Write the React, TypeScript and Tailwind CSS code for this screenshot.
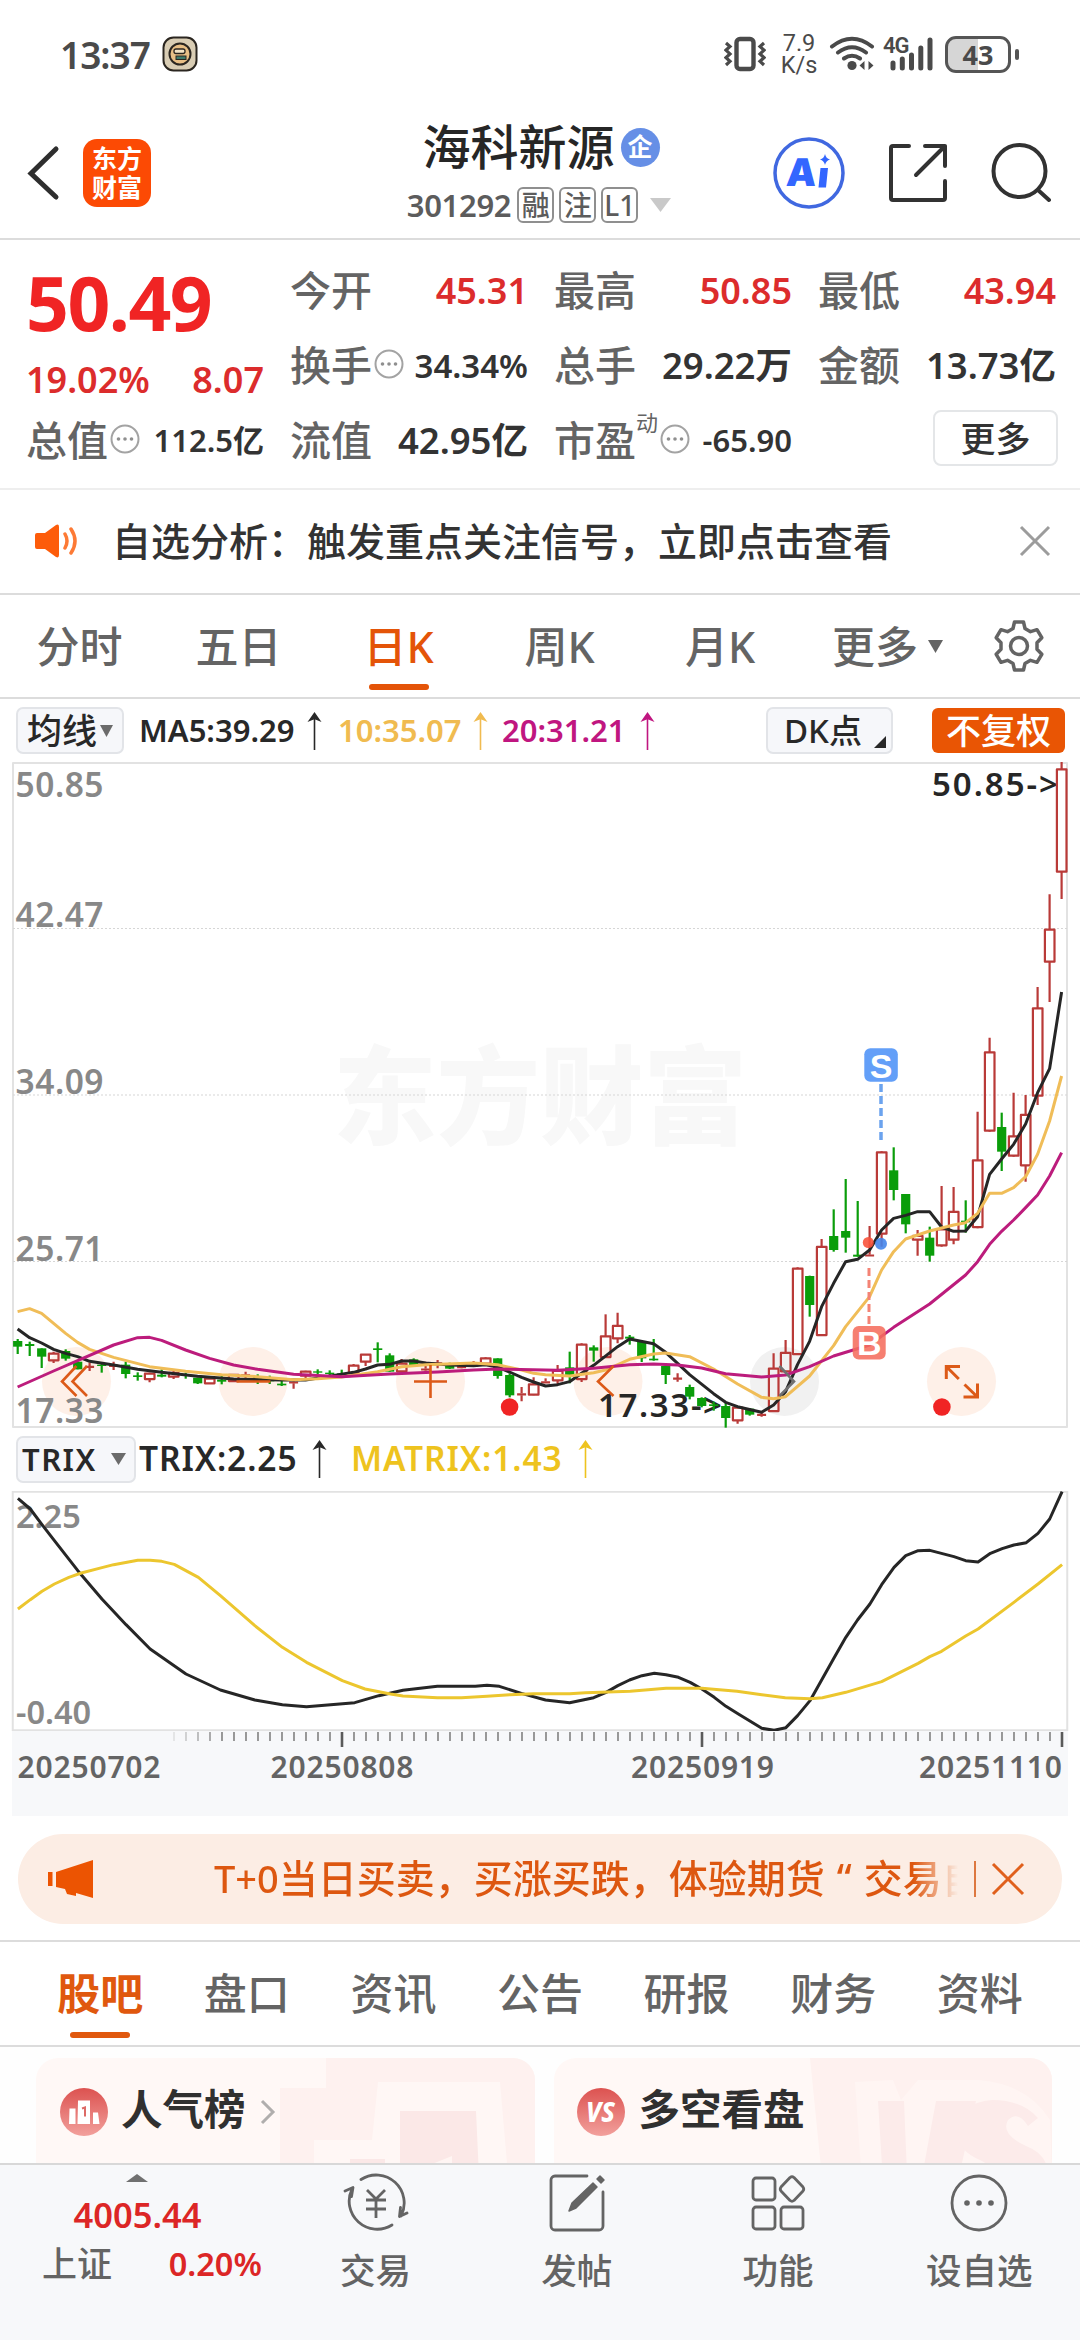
import type { ReactNode } from "react";

const STEP = 12;
const FIRST_X = 17.6;

type Candle = [dir: "u" | "d", high: number, top: number, bottom: number, low: number];
type Point = [index: number, y: number];

// y values are stored in thirds of a pixel, relative to the base of their block
const LOW_BASE = 478;
const HIGH_BASE = -22;

const EARLY: Candle[] = [
  ["d", 297, 303, 320, 342], ["d", 305, 312, 318, 348], ["d", 325, 325, 350, 384], ["u", 335, 340, 362, 369],
  ["d", 328, 333, 356, 362], ["d", 365, 365, 388, 388], ["u", 368, 379, 382, 393], ["d", 372, 374, 378, 398],
  ["u", 365, 376, 379, 390], ["d", 365, 374, 402, 415], ["d", 397, 406, 411, 422], ["u", 398, 400, 418, 427],
  ["d", 388, 404, 410, 412], ["u", 393, 398, 411, 417], ["d", 398, 403, 408, 416], ["d", 413, 413, 430, 432],
  ["u", 413, 415, 431, 432], ["d", 402, 419, 425, 433], ["u", 402, 404, 424, 424], ["u", 395, 404, 408, 420],
  ["d", 403, 408, 424, 432], ["d", 407, 419, 424, 432], ["d", 420, 431, 436, 438], ["u", 422, 425, 430, 446],
  ["u", 392, 394, 408, 420], ["d", 388, 394, 398, 403], ["d", 391, 398, 402, 405], ["d", 389, 400, 404, 408],
  ["u", 372, 376, 400, 402], ["u", 342, 343, 366, 378], ["d", 307, 325, 330, 367], ["d", 340, 346, 395, 395],
  ["u", 357, 370, 395, 396], ["d", 355, 358, 375, 377], ["u", 365, 385, 392, 400], ["u", 360, 368, 372, 385],
  ["d", 368, 372, 386, 387], ["u", 372, 380, 383, 385], ["u", 363, 374, 378, 380], ["u", 352, 354, 372, 378],
  ["d", 355, 355, 408, 416], ["d", 400, 405, 466, 472], ["u", 441, 460, 466, 484], ["u", 412, 432, 465, 466],
  ["u", 415, 424, 430, 430], ["u", 375, 392, 422, 432], ["d", 335, 382, 408, 430], ["u", 310, 313, 418, 426],
  ["d", 316, 322, 332, 365], ["u", 223, 288, 352, 352], ["u", 218, 257, 296, 310], ["d", 285, 290, 296, 314],
  ["d", 302, 304, 355, 366], ["d", 297, 356, 361, 362], ["d", 376, 378, 405, 432], ["u", 400, 414, 418, 425],
  ["d", 434, 441, 470, 478], ["d", 472, 474, 498, 502], ["d", 485, 493, 498, 512], ["d", 488, 498, 534, 563],
  ["u", 500, 502, 542, 551], ["d", 504, 506, 524, 527], ["u", 515, 523, 526, 530], ["u", 340, 385, 514, 515],
  ["u", 300, 338, 395, 400], ["u", 82, 85, 343, 345], ["d", 107, 108, 195, 230],
];

const LATE: Candle[] = [
  ["u", 1497, 1520, 1786, 1788], ["d", 1408, 1488, 1530, 1535], ["d", 1317, 1473, 1493, 1538], ["d", 1383, 1544, 1550, 1550],
  ["u", 1458, 1544, 1549, 1549], ["u", 1234, 1236, 1482, 1520], ["d", 1222, 1291, 1350, 1381], ["d", 1362, 1362, 1453, 1480],
  ["u", 1470, 1487, 1500, 1547], ["d", 1460, 1493, 1547, 1565], ["u", 1338, 1467, 1517, 1520], ["u", 1341, 1415, 1500, 1513],
  ["d", 1381, 1442, 1447, 1478], ["u", 1115, 1260, 1462, 1465], ["u", 893, 936, 1173, 1175], ["d", 1118, 1161, 1235, 1293],
  ["u", 1058, 1188, 1248, 1250], ["u", 1065, 1124, 1277, 1325], ["u", 741, 804, 1068, 1095], ["u", 463, 568, 666, 786],
  ["u", 66, 87, 396, 477],
];

const MA5_EARLY: Point[] = [
  [0, 267], [1, 293], [2, 309], [3, 328], [4, 340], [5, 350], [6, 364], [8, 375], [10, 388], [12, 397], [15, 409],
  [18, 417], [22, 420], [24, 420], [27, 403], [28, 397], [29, 387], [30, 375], [31, 373], [32, 363], [33, 363],
  [34, 369], [36, 375], [38, 377], [39, 374], [40, 381], [41, 396], [42, 412], [43, 426], [44, 438], [45, 434],
  [46, 425], [47, 400], [48, 376], [50, 320], [51, 297], [53, 311], [54, 337], [55, 370], [56, 404], [58, 461],
  [59, 487], [60, 500], [62, 517], [63, 495], [64, 455], [65, 373], [66, 304], [67, 200], [68, 130], [69, 65],
  [70, 58], [71, 30],
];
const MA5_LATE: Point[] = [
  [72, 1470], [73, 1435], [74, 1426], [75, 1415], [76, 1415], [77, 1461], [78, 1474], [79, 1473], [80, 1430],
  [81, 1303], [82, 1257], [83, 1213], [84, 1152], [85, 1058], [86, 986], [87, 756],
];
const MA10_EARLY: Point[] = [
  [0, 215], [1, 206], [2, 220], [3, 250], [4, 280], [5, 307], [6, 328], [8, 352], [11, 380], [14, 394], [17, 404],
  [20, 410], [23, 419], [25, 416], [27, 411], [30, 395], [32, 380], [34, 374], [38, 369], [40, 374], [42, 390],
  [43, 400], [44, 404], [46, 408], [48, 398], [49, 390], [51, 358], [53, 342], [54, 339], [56, 350], [58, 387],
  [60, 432], [62, 472], [63, 476], [64, 470], [66, 408], [68, 317], [69, 260], [71, 170], [72, 90],
];
const MA10_LATE: Point[] = [
  [73, 1535], [74, 1497], [76, 1473], [78, 1455], [79, 1448], [80, 1420], [81, 1360], [82, 1360], [83, 1343],
  [84, 1310], [85, 1243], [86, 1143], [87, 1008],
];
const MA20_EARLY: Point[] = [
  [0, 441], [3, 393], [5, 362], [8, 315], [10, 293], [11, 292], [12, 301], [14, 330], [16, 355], [18, 375],
  [20, 388], [23, 403], [27, 410], [31, 402], [35, 396], [38, 390], [40, 387], [45, 391], [48, 385], [51, 374],
  [53, 372], [55, 375], [57, 384], [59, 401], [62, 411], [64, 405], [66, 380], [68, 348], [71, 315], [73, 262],
  [76, 192], [79, 105], [80, 65],
];
const MA20_LATE: Point[] = [
  [81, 1513], [82, 1474], [83, 1440], [84, 1403], [85, 1365], [86, 1308], [87, 1238],
];

const TRIX =
  "26,233 44,265 61,312 79,360 113,450 148,535 183,612 218,685 270,760 320,808 370,838 410,852 445,858 515,846 550,825 585,809 635,797 690,797 707,794 725,797 757,818 792,838 827,846 862,831 880,815 897,795 914,778 932,765 950,758 967,762 985,770 1002,785 1019,805 1037,830 1054,857 1072,880 1106,923 1124,929 1141,921 1158,885 1176,840 1210,715 1228,650 1245,598 1263,550 1280,492 1298,440 1315,405 1333,390 1350,389 1385,408 1402,420 1420,424 1438,398 1455,384 1472,373 1490,366 1507,338 1524,295 1542,213";
const MATRIX =
  "26,565 44,537 61,512 79,490 100,470 118,457 148,441 165,432 200,419 218,419 235,422 253,431 288,470 320,525 370,615 410,680 445,725 497,780 530,805 567,820 585,826 635,831 670,831 707,827 740,822 775,819 827,819 850,816 915,812 967,803 1019,803 1070,812 1106,822 1140,831 1176,834 1194,831 1228,815 1280,783 1333,728 1350,708 1367,692 1402,646 1420,625 1472,545 1507,490 1542,432";

const xAt = (i: number) => FIRST_X + i * STEP;

function line(early: Point[], late: Point[]) {
  return [
    ...early.map(([i, y]) => `${xAt(i)},${LOW_BASE + y / 3}`),
    ...late.map(([i, y]) => `${xAt(i)},${HIGH_BASE + y / 3}`),
  ].join(" ");
}

function CandleBar({ candle, index, base }: { candle: Candle; index: number; base: number }) {
  const [dir, high, top, bottom, low] = candle;
  const x = xAt(index);
  const y = (v: number) => base + v / 3;
  const height = Math.max((bottom - top) / 3, 1);
  if (dir === "d") {
    return (
      <g fill="#0a9d0a">
        <rect x={x - 1} y={y(high)} width={2.2} height={(low - high) / 3} />
        <rect x={x - 4.5} y={y(top)} width={9.2} height={height} />
      </g>
    );
  }
  return (
    <g stroke="#b93a38" strokeWidth={2.2} fill="none">
      <path d={`M${x} ${y(high)}V${y(top)}M${x} ${y(bottom)}V${y(low)}`} />
      {height < 4 ? (
        <path d={`M${x - 4.5} ${y((top + bottom) / 2)}h9M${x} ${y(top)}V${y(bottom)}`} />
      ) : (
        <rect x={x - 4.7} y={y(top) + 0.3} width={9.6} height={height - 0.6} />
      )}
    </g>
  );
}

/* ---------- status bar ---------- */

function StatusBar() {
  return (
    <div className="flex h-[108px] items-center pl-[60px] pr-[61px] text-[#4a4a4a]">
      <span className="w-[102px] text-[37px] font-semibold leading-none tracking-[-1px]">13:37</span>
      <svg width="36" height="36" viewBox="0 0 36 36" className="mb-[1px]">
        <rect x="1.5" y="1.5" width="33" height="33" rx="10" fill="#d9cdb4" stroke="#2b2620" strokeWidth="2" />
        <circle cx="18" cy="18" r="10.5" fill="#e8bf86" stroke="#2b2620" strokeWidth="2" />
        <rect x="12" y="13" width="11" height="4.5" rx="2" fill="#f3e3c4" stroke="#2b2620" strokeWidth="1.3" />
        <rect x="14" y="20" width="10" height="3.5" fill="#3d7a6b" stroke="#2b2620" strokeWidth="1" />
      </svg>
      <div className="flex-1" />
      <svg width="42" height="36" viewBox="0 0 42 36" fill="none" stroke="#4a4a4a" strokeWidth="3.2">
        <rect x="12.5" y="3" width="17" height="30" rx="3.5" strokeWidth="4.4" />
        <path d="M2 7l4 3.5-4 3.7 4 3.7-4 3.7 4 3.7-4 3.7M40 7l-4 3.5 4 3.7-4 3.7 4 3.7-4 3.7 4 3.7" />
      </svg>
      <div className="ml-[12px] flex w-[42px] flex-col items-center font-[Roboto] text-[23.5px] leading-[22px]">
        <span>7.9</span>
        <span>K/s</span>
      </div>
      <svg width="48" height="36" viewBox="0 0 48 36" className="ml-[8px]" fill="none" stroke="#4a4a4a" strokeWidth="4" strokeLinecap="round">
        <path d="M4 10.500Q24 -5 44 10.500M10 16.500Q24 6 38 16.500M16 22.500Q24 17 32 22.500" />
        <circle cx="24" cy="29.500" r="4.600" fill="#4a4a4a" stroke="none" />
        <path d="M31.500 29.500l5-4.500v9zM45.500 29.500l-5-4.500v9z" fill="#4a4a4a" stroke="none" />
      </svg>
      <div className="relative ml-[6px] h-[36px] w-[52px]">
        <span className="absolute left-[1px] top-[-1px] font-[Roboto] text-[22px] font-semibold leading-none tracking-[-1px]">4G</span>
        <svg width="52" height="36" viewBox="0 0 52 36" stroke="#4a4a4a" strokeWidth="5" strokeLinecap="round">
          <path d="M11 27v5M20.300 23v9M29.500 19v13M38.800 12v20M48 4v28" />
        </svg>
      </div>
      <div className="ml-[11px] flex items-center gap-[4px]">
        <div className="flex h-[37px] w-[66px] items-center justify-center rounded-[11px] border-[3px] border-[#555] bg-linear-to-r from-[#d6d6d6] from-50% to-white to-50%">
          <span className="text-[27px] font-bold leading-none">43</span>
        </div>
        <div className="h-[11px] w-[4px] rounded-full bg-[#555]" />
      </div>
    </div>
  );
}

/* ---------- title bar ---------- */

function Tag({ children }: { children: ReactNode }) {
  return (
    <span className="flex h-[36px] w-[37px] items-center justify-center rounded-[6px] border-2 border-[#8f8f8f] text-[28px] font-medium leading-none">
      {children}
    </span>
  );
}

function TitleBar() {
  return (
    <header className="flex h-[132px] border-b-2 border-[#dcdcdc]">
      <div className="flex w-[398px] items-center pl-[26px]">
        <svg width="34" height="56" viewBox="0 0 34 56" fill="none" stroke="#2e2e2e" strokeWidth="5" strokeLinecap="round">
          <path d="M30 4L5 28.500 30 52" />
        </svg>
        <div className="ml-[23px] flex h-[68px] w-[68px] flex-col items-center justify-center rounded-[14px] bg-[#fc4a04] text-[25px] font-bold leading-[29px] text-white">
          <span>东方</span>
          <span>财富</span>
        </div>
      </div>
      <div className="flex w-[280px] flex-col items-center pt-[15px]">
        <div className="flex items-center gap-[6px] pl-[6px]">
          <h1 className="text-[48px] font-medium leading-[48px] text-[#262626]">海科新源</h1>
          <span className="flex h-[39px] w-[39px] items-center justify-center rounded-full bg-[#668fe6] text-[25px] font-bold text-white">企</span>
        </div>
        <div className="mt-[16px] flex items-center pl-[2px] text-[#5c5c5c]">
          <span className="mr-[6px] text-[31px] font-semibold leading-none tracking-[-0.3px]">301292</span>
          <div className="flex gap-[5px]">
            <Tag>融</Tag>
            <Tag>注</Tag>
            <Tag>L1</Tag>
          </div>
          <svg width="21" height="14" viewBox="0 0 21 14" className="ml-[12px]" fill="#c9c9c9">
            <path d="M0 0h21L10.500 14z" />
          </svg>
        </div>
      </div>
      <div className="flex flex-1 items-center justify-end gap-[43px] pr-[29px]">
        <svg width="72" height="72" viewBox="0 0 72 72">
          <circle cx="36" cy="36" r="34" fill="none" stroke="#4068e0" strokeWidth="3.500" />
          <text x="13" y="49" fontSize="38" fontWeight="900" fill="#3366ff" transform="skewX(-4) translate(3 0)" fontFamily="Inter, sans-serif">A</text>
          <path d="M47.500 31h7.500l-2 19.500h-7.500zM52 17q1 4.500 5 5.500-4 1-5 5.500-1-4.500-5-5.500 4-1 5-5.500z" fill="#3366ff" />
        </svg>
        <svg width="60" height="60" viewBox="0 0 60 60" fill="none" stroke="#323232" strokeWidth="4" strokeLinecap="round" strokeLinejoin="round">
          <path d="M21 3H5a2 2 0 0 0-2 2v50a2 2 0 0 0 2 2h50a2 2 0 0 0 2-2V38M37 3h20v20M57 3L28 32" />
        </svg>
        <svg width="60" height="60" viewBox="0 0 60 60" fill="none" stroke="#323232" strokeWidth="4" strokeLinecap="round">
          <circle cx="28.500" cy="28" r="26" />
          <path d="M47 47l11 10" />
        </svg>
      </div>
    </header>
  );
}

/* ---------- quote ---------- */

function InfoDot() {
  return (
    <svg width="30" height="30" viewBox="0 0 30 30" className="mb-[4px] ml-[2px]">
      <circle cx="15" cy="15" r="13.500" fill="none" stroke="#a3a3a3" strokeWidth="2" />
      <g fill="#8f8f8f">
        <circle cx="8.500" cy="15" r="1.800" />
        <circle cx="15" cy="15" r="1.800" />
        <circle cx="21.500" cy="15" r="1.800" />
      </g>
    </svg>
  );
}

function Stat({ label, value, info, sup, valueClass }: { label: string; value: string; info?: boolean; sup?: string; valueClass: string }) {
  return (
    <div className="flex h-[75px] items-center justify-between">
      <div className="flex items-center">
        <span className="text-[41px] font-medium leading-none text-[#646464]">{label}</span>
        {sup && <span className="mb-[38px] w-[22px] text-[22px] leading-none text-[#646464]">{sup}</span>}
        {info && <InfoDot />}
      </div>
      <span className={"font-semibold leading-none " + valueClass}>{value}</span>
    </div>
  );
}

function Quote() {
  const red = "text-[36px] text-[#dc2c2c]";
  const dark = "text-[36.5px] text-[#333]";
  return (
    <section className="grid h-[250px] grid-cols-4 gap-x-[26px] border-b-2 border-[#eee] pl-[26px] pr-[24px] pt-[13px]">
      <div className="flex flex-col">
        <div className="flex h-[150px] flex-col">
          <span className="mt-[12px] text-[75px] font-bold leading-none tracking-[-1.5px] text-[#f02424]">50.49</span>
          <div className="mt-[22px] flex justify-between text-[36px] font-semibold leading-none text-[#dc2c2c]">
            <span>19.02%</span>
            <span>8.07</span>
          </div>
        </div>
        <Stat label="总值" info value="112.5亿" valueClass="text-[31px] text-[#333]" />
      </div>
      <div>
        <Stat label="今开" value="45.31" valueClass={red} />
        <Stat label="换手" info value="34.34%" valueClass="text-[33px] text-[#333]" />
        <Stat label="流值" value="42.95亿" valueClass={dark} />
      </div>
      <div>
        <Stat label="最高" value="50.85" valueClass={red} />
        <Stat label="总手" value="29.22万" valueClass={dark} />
        <Stat label="市盈" sup="动" info value="-65.90" valueClass="text-[31px] text-[#333]" />
      </div>
      <div>
        <Stat label="最低" value="43.94" valueClass={red} />
        <Stat label="金额" value="13.73亿" valueClass={dark} />
        <div className="flex h-[75px] items-center justify-end">
          <button className="-mr-[2px] mb-[5px] flex h-[56px] w-[125px] items-center justify-center rounded-[8px] border-2 border-[#e4e6e8] text-[35px] font-medium leading-none text-[#333]">
            更多
          </button>
        </div>
      </div>
    </section>
  );
}

function Notice() {
  return (
    <div className="flex h-[105px] items-center border-b-2 border-[#dcdcdc] pb-[2px] pl-[33px] pr-[29px]">
      <svg width="48" height="38" viewBox="0 0 48 38">
        <path d="M2 13q0-2 2-2h8L23 3q3-1.500 3 2v28q0 3.500-3 2l-11-8H4q-2 0-2-2z" fill="#fd5c0a" />
        <path d="M32 12q4 7 0 14M38 7q8 12 0 24" fill="none" stroke="#fd7a35" strokeWidth="3.500" strokeLinecap="round" />
      </svg>
      <p className="ml-[31px] flex-1 whitespace-nowrap text-[39px] font-medium leading-none text-[#333]">
        自选分析：触发重点关注信号，立即点击查看
      </p>
      <svg width="32" height="32" viewBox="0 0 32 32" stroke="#9c9c9c" strokeWidth="3">
        <path d="M2 2l28 28M30 2L2 30" />
      </svg>
    </div>
  );
}

/* ---------- period tabs ---------- */

const PERIODS = [
  { label: "分时", width: "w-[159px]" },
  { label: "五日", width: "w-[159px]" },
  { label: "日K", width: "w-[161px]", active: true },
  { label: "周K", width: "w-[161px]" },
  { label: "月K", width: "w-[160px]" },
];

function PeriodTabs() {
  return (
    <nav className="flex h-[104px] border-b-2 border-[#dcdcdc] text-[43px] font-medium leading-none text-[#646464]">
      {PERIODS.map(({ label, width, active }) => (
        <div key={label} className={"relative flex items-center justify-center " + width + (active ? " text-[#e45408]" : "")}>
          {label}
          {active && <span className="absolute bottom-[7px] h-[6px] w-[60px] rounded-full bg-[#e45408]" />}
        </div>
      ))}
      <div className="flex flex-1 items-center pl-[32px]">
        更多
        <svg width="15" height="13" viewBox="0 0 15 13" className="ml-[10px]" fill="#646464">
          <path d="M0 0h15L7.500 13z" />
        </svg>
        <svg width="54" height="54" viewBox="0 0 54 54" className="ml-[49px]" fill="none" stroke="#646464" strokeWidth="3.500" strokeLinejoin="round">
          <path d="M22.500 3h9l1.500 6.500 5.500 3.200 6.500-2 4.800 8-4.800 5v6.600l4.800 5-4.800 8-6.500-2-5.500 3.200-1.500 6.500h-9L21 44.500l-5.500-3.200-6.500 2-4.800-8 4.800-5v-6.600l-4.800-5 4.800-8 6.500 2L21 9.500z" />
          <circle cx="27" cy="27" r="8.500" />
        </svg>
      </div>
    </nav>
  );
}

function UpArrow({ color }: { color: string }) {
  return (
    <svg width="15" height="38" viewBox="0 0 15 38" className="w-[15px]" fill={color}>
      <path d="M7.500 0l7 10-6.200-2.500V38H6.700V7.500L.5 10z" />
    </svg>
  );
}

function IndicatorBar() {
  return (
    <div className="flex h-[63px] items-center pl-[16px] pr-[15px] text-[31px] font-semibold leading-none">
      <div className="flex h-[47px] w-[108px] items-center justify-center gap-[3px] rounded-[7px] border-2 border-[#e2e4e8] bg-[#f6f7fa] text-[35px] font-medium text-[#282828]">
        均线
        <svg width="13" height="12" viewBox="0 0 13 12" fill="#6b6b6b">
          <path d="M0 0h13L6.500 12z" />
        </svg>
      </div>
      <span className="ml-[15px] w-[168px] text-[#282828]">MA5:39.29</span>
      <UpArrow color="#282828" />
      <span className="ml-[16px] w-[135px] text-[#f0bb50]">10:35.07</span>
      <UpArrow color="#f0bb50" />
      <span className="ml-[14px] w-[138px] text-[#c01680]">20:31.21</span>
      <UpArrow color="#c01680" />
      <div className="flex-1" />
      <div className="relative flex h-[47px] w-[127px] items-center rounded-[7px] border-2 border-[#e2e4e8] bg-[#f6f7fa] pl-[16px] text-[33px] font-medium text-[#282828]">
        DK点
        <svg width="12" height="12" viewBox="0 0 12 12" className="absolute bottom-[4px] right-[5px]" fill="#282828">
          <path d="M12 0v12H0z" />
        </svg>
      </div>
      <div className="ml-[39px] flex h-[45px] w-[133px] items-center justify-center rounded-[6px] bg-[#e95504] text-[35px] font-medium text-white">
        不复权
      </div>
    </div>
  );
}

/* ---------- charts ---------- */

const AXIS = [
  { label: "50.85", y: 35 },
  { label: "42.47", y: 165 },
  { label: "34.09", y: 332 },
  { label: "25.71", y: 499 },
  { label: "17.33", y: 661 },
];

function CandleChart() {
  return (
    <svg width="1080" height="666" viewBox="0 0 1080 666" className="block overflow-visible" strokeLinejoin="round">
      <text x="333" y="374" fontSize="107" fontWeight="900" textLength="414" lengthAdjust="spacingAndGlyphs" fill="#f8f8f8">东方财富</text>
      <rect x="13" y="1" width="1054" height="664" fill="none" stroke="#e2e2e2" strokeWidth="2" />
      <path d="M13 166.500h1054M13 333h1054M13 499.500h1054" stroke="#d6d6d6" strokeWidth="1.200" strokeDasharray="2 2" />
      {[76.5, 253, 430.5, 608, 961.5].map((cx) => (
        <circle key={cx} cx={cx} cy="619.500" r="34.500" fill="#fef0e8" />
      ))}
      <circle cx="784.500" cy="619.500" r="34.500" fill="#f1f1f1" />
      <g fontSize="33.500" fontWeight="600" fill="#888">
        {AXIS.map(({ label, y }) => (
          <text key={label} x="15.500" y={y} textLength="88">{label}</text>
        ))}
      </g>
      <g fontSize="33" fontWeight="600" fill="#262626">
        <text x="932" y="34" textLength="126">{"50.85->"}</text>
        <text x="598" y="655" textLength="124">{"17.33->"}</text>
      </g>
      {EARLY.map((c, i) => (
        <CandleBar key={i} candle={c} index={i} base={LOW_BASE} />
      ))}
      {LATE.map((c, i) => (
        <CandleBar key={i} candle={c} index={i + EARLY.length} base={HIGH_BASE} />
      ))}
      <g fill="none" strokeWidth="3">
        <polyline points={line(MA5_EARLY, MA5_LATE)} stroke="#262626" />
        <polyline points={line(MA10_EARLY, MA10_LATE)} stroke="#f0bd58" />
        <polyline points={line(MA20_EARLY, MA20_LATE)} stroke="#bc1c7c" />
      </g>

      {/* zoom and pan controls */}
      <g fill="none" stroke="#dc5a18" strokeWidth="2.600" strokeLinejoin="miter">
        <path d="M76.500 604L62 619.500 76.500 634M87 604L72.500 619.500 87 634" />
        <path d="M236.500 619.500h34M414 619.500h33M430.500 603v33" />
        <path d="M613.500 604L598 619.500l15.500 14.500" />
        <path d="M946.300 617V604.500H960M946.300 604.500l12.500 12.500M977.500 621.500V635H963.500M964.500 622.500l13 12.500" strokeWidth="3" />
        <path d="M779.500 604l14.500 15.500-14.500 14.500" stroke="#707070" />
      </g>
      <g fill="#f02424">
        <circle cx="509.600" cy="645" r="8.800" />
        <circle cx="941.900" cy="645" r="8.800" />
      </g>

      {/* buy and sell marks */}
      <path d="M869 506v56" stroke="#f48375" strokeWidth="3" strokeDasharray="8 4" />
      <path d="M881 322v57" stroke="#6ba3ee" strokeWidth="3.500" strokeDasharray="8 4" />
      <circle cx="868.300" cy="480.500" r="5.500" fill="#f8533c" fillOpacity="0.900" />
      <circle cx="881" cy="481.700" r="6" fill="#4585ea" fillOpacity="0.900" />
      <rect x="852.700" y="564" width="33" height="33.500" rx="6" fill="#f56d5d" fillOpacity="0.880" />
      <rect x="864.300" y="286.300" width="33.500" height="33.500" rx="6" fill="#639ff8" />
      <g fontSize="34" fill="#fff" textAnchor="middle" fontFamily="Liberation Sans, sans-serif" fontWeight="700">
        <text x="869.200" y="593">B</text>
        <text x="881" y="315.500">S</text>
      </g>
    </svg>
  );
}

function TrixBar() {
  return (
    <div className="flex h-[63px] items-center pb-[1px] pl-[16px] text-[33.500px] font-semibold leading-none">
      <div className="flex h-[47px] w-[120px] items-center justify-between rounded-[7px] border-2 border-[#e2e4e8] bg-[#f6f7fa] pl-[4px] pr-[8px] text-[31px] text-[#282828]">
        <span className="tracking-[1.5px]">TRIX</span>
        <svg width="15" height="12" viewBox="0 0 15 12" fill="#6b6b6b">
          <path d="M0 0h15L7.500 12z" />
        </svg>
      </div>
      <span className="ml-[3px] w-[173px] tracking-[0.9px] text-[#282828]">TRIX:2.25</span>
      <UpArrow color="#282828" />
      <span className="ml-[24px] w-[227px] tracking-[0.9px] text-[#eec31e]">MATRIX:1.43</span>
      <UpArrow color="#eec31e" />
    </div>
  );
}

function TrixChart() {
  return (
    <div className="relative h-[239px] text-[32.500px] font-semibold leading-none text-[#888]">
      <span className="absolute left-[16px] top-[9px]">2.25</span>
      <span className="absolute left-[16px] top-[205px]">-0.40</span>
      <svg width="1080" height="240" viewBox="0 211 1568 720" preserveAspectRatio="none" className="relative block" fill="none">
        <rect x="18.500" y="213" width="1531" height="716" stroke="#e2e2e2" strokeWidth="2" vectorEffect="non-scaling-stroke" />
        <polyline points={TRIX} stroke="#262626" strokeWidth="3" vectorEffect="non-scaling-stroke" strokeLinejoin="round" />
        <polyline points={MATRIX} stroke="#ecc62e" strokeWidth="3" vectorEffect="non-scaling-stroke" strokeLinejoin="round" />
      </svg>
    </div>
  );
}

function DateAxis() {
  const ticks = Array.from({ length: 75 }, (_, i) => i + 13);
  return (
    <div className="mx-[12px] h-[86px] bg-[#f7f8fa]">
      <svg width="1056" height="86" viewBox="12 0 1056 86" className="block">
        {ticks.map((i) => {
          const major = i % 30 === 27;
          return (
            <path
              key={i}
              d={`M${18 + i * STEP} 2v${major ? 15 : 9}`}
              stroke={major ? "#5a5a5a" : "#808080"}
              strokeWidth={major ? 2.6 : 1.6}
              opacity={Math.min(1, (i - 12) / 5)}
            />
          );
        })}
        <g fontSize="30" fontWeight="600" fill="#646464">
          <text x="17.500" y="48" textLength="143">20250702</text>
          <text x="270.500" y="48" textLength="143">20250808</text>
          <text x="631" y="48" textLength="143">20250919</text>
          <text x="919" y="48" textLength="143">20251110</text>
        </g>
      </svg>
    </div>
  );
}

/* ---------- lower part ---------- */

function Promo() {
  return (
    <div className="mx-[18px] mt-[18px] flex h-[90px] items-center rounded-full bg-[#fcede4] pl-[29px] pr-[37px]">
      <svg width="47" height="40" viewBox="0 0 47 40" fill="#ec5402">
        <path d="M1 13h4.500v14H1zM9 13L46 1v38l-17-5v3l-9-2-2-5-9-2z" />
      </svg>
      <p className="mb-[3px] ml-[120px] w-[744px] overflow-hidden whitespace-nowrap bg-linear-to-r from-[#dd5710] from-94% to-transparent to-100% bg-clip-text text-[39px] font-medium leading-[54px] text-transparent">
        <span className="text-[38px]">T+0</span>当日买卖，买涨买跌，体验期货<span className="inline-block w-[39px] text-center">“</span>交易自由
      </p>
      <span className="ml-[16px] h-[36px] w-[2px] bg-[#dd7840]" />
      <svg width="34" height="34" viewBox="0 0 34 34" className="ml-auto" stroke="#e0601c" strokeWidth="3">
        <path d="M2 2l30 30M32 2L2 32" />
      </svg>
    </div>
  );
}

const SECTIONS = ["股吧", "盘口", "资讯", "公告", "研报", "财务", "资料"];

function SectionTabs() {
  return (
    <nav className="mt-[16px] flex h-[107px] border-y-2 border-[#dcdcdc] px-[27px] text-[43px] font-medium leading-none text-[#646464]">
      {SECTIONS.map((name, i) => (
        <div key={name} className={"relative flex flex-1 items-center justify-center" + (i === 0 ? " font-bold text-[#e0580e]" : "")}>
          {name}
          {i === 0 && <span className="absolute bottom-[7px] h-[6px] w-[60px] rounded-full bg-[#e0580e]" />}
        </div>
      ))}
    </nav>
  );
}

function Cards() {
  return (
    <div className="flex flex-1 gap-[19px] overflow-hidden bg-[#fefefe] pl-[36px] pr-[28px] pt-[11px] text-[41.500px] font-bold leading-none text-[#303030]">
      <div className="relative h-[140px] flex-1 overflow-hidden rounded-[22px] bg-[#fff8f6]">
        <svg width="499" height="140" viewBox="0 0 499 140" className="absolute inset-0">
          <path d="M290 0h209v140H244V30h46z" fill="#fef1ef" />
          <path d="M342 24h122l10 116H278V82h58z" fill="#fff7f5" />
          <path d="M364 53h76l4 87h-80zM314 101h35v39h-35z" fill="#fbe8e7" />
          <path d="M396 106l20-8v42h-20z" fill="#fff5f3" />
        </svg>
        <div className="relative flex h-[108px] items-center pl-[24px]">
          <svg width="48" height="48" viewBox="0 0 48 48">
            <defs>
              <linearGradient id="disc" x1="0" y1="0" x2="0" y2="1">
                <stop offset="0" stopColor="#dc5250" />
                <stop offset="1" stopColor="#f2a09c" />
              </linearGradient>
            </defs>
            <circle cx="24" cy="24" r="24" fill="url(#disc)" />
            <path d="M9.500 20.500h6V36H9zM18 12.500h12V36H17.500zM33 24.500h5L39.500 36H33z" fill="#fff" />
            <path d="M22 20.500l3-1v9" fill="none" stroke="#dd6a66" strokeWidth="2" />
          </svg>
          <span className="mb-[4px] ml-[13px]">人气榜</span>
          <svg width="16" height="26" viewBox="0 0 16 26" className="ml-[14px]" fill="none" stroke="#b0aead" strokeWidth="3">
            <path d="M2 2l11 11L2 24" />
          </svg>
        </div>
      </div>
      <div className="relative h-[140px] flex-1 overflow-hidden rounded-[22px] bg-[#fff8f6]">
        <svg width="499" height="140" viewBox="0 0 499 140" className="absolute inset-0">
          <path d="M256 0h243v140H270z" fill="#fef1ef" />
          <path d="M301 24l38-2 8 20 17-20h60q50 4 72 40l3 78H309z" fill="#fff5f3" />
          <path d="M324 43h26l4 97h-24zM382 43h40l-22 97h-36z" fill="#fcebea" />
          <path d="M484 60q-16-18-46-18-32 2-34 30-2 20 22 30 22 10 14 38h50q14-40-18-52-26-12-18-26 10-10 20 6z" fill="#fcebea" />
        </svg>
        <div className="relative flex h-[108px] items-center pl-[23px]">
          <svg width="48" height="48" viewBox="0 0 48 48">
            <circle cx="24" cy="24" r="24" fill="url(#disc)" />
            <text x="23.500" y="34" fontSize="28" fontWeight="800" fontStyle="italic" fill="#fff" textAnchor="middle" textLength="29" lengthAdjust="spacingAndGlyphs">VS</text>
          </svg>
          <span className="mb-[4px] ml-[14px]">多空看盘</span>
        </div>
      </div>
    </div>
  );
}

function NavItem({ label, children }: { label: string; children: ReactNode }) {
  return (
    <div className="flex w-[201.400px] flex-col items-center">
      <svg width="68" height="60" viewBox="-34 -30 68 60" className="mt-[8px]" fill="none" stroke="#646464" strokeWidth="2.800" strokeLinecap="round" strokeLinejoin="round">
        {children}
      </svg>
      <span className="mt-[20px] text-[35.500px] font-medium leading-none">{label}</span>
    </div>
  );
}

function BottomNav() {
  return (
    <footer className="flex h-[177px] border-t-2 border-[#d8d8d8] bg-[#f7f8fa] text-[#646464]">
      <div className="flex w-[275px] flex-col items-center pt-[9px] font-medium">
        <svg width="22" height="8" viewBox="0 0 22 8" fill="#707070">
          <path d="M11 0l11 8H0z" />
        </svg>
        <span className="mt-[15px] text-[34.500px] font-semibold leading-[36px] text-[#dc2626]">4005.44</span>
        <div className="mt-[13px] flex w-full items-center justify-between pl-[42px] pr-[13px]">
          <span className="text-[35px] leading-[36px]">上证</span>
          <span className="text-[32.500px] font-semibold leading-[36px] text-[#dc2626]">0.20%</span>
        </div>
      </div>
      <NavItem label="交易">
        <path d="M-15 -23.500A28 28 0 0 1 25 13M16 22A28 28 0 0 1 -24 -14M-31 -12l8-3.500-1.500 9M31 10l-7.500 3.500 1-9" />
        <path d="M-9 -13L0 -4l9-9M0 -4V15M-10 -3h20M-10 6h20" strokeLinecap="butt" />
      </NavItem>
      <NavItem label="发帖">
        <path d="M10 -27H-22a4 4 0 0 0-4 4V23a4 4 0 0 0 4 4H22a4 4 0 0 0 4-4V-11" />
        <path d="M-8 8l3-8L16 -20l4 4L-1 5zM20 -24l3-3 4 4-3 3z" fill="#646464" strokeWidth="1.500" />
      </NavItem>
      <NavItem label="功能">
        <rect x="-25" y="-25" width="22" height="22" rx="3" />
        <rect x="-25" y="4" width="22" height="22" rx="3" />
        <rect x="3" y="4" width="22" height="22" rx="3" />
        <path d="M12 -25.500q2-1.500 4 0l9 9.500q1.500 2 0 4l-9 9.500q-2 1.500-4 0l-9-9.500q-1.500-2 0-4z" />
      </NavItem>
      <NavItem label="设自选">
        <circle r="27" />
        <g fill="#646464" stroke="none">
          <circle cx="-12" r="2.800" />
          <circle r="2.800" />
          <circle cx="12" r="2.800" />
        </g>
      </NavItem>
    </footer>
  );
}

export default function App() {
  return (
    <div lang="zh-CN" className="flex h-[2340px] w-[1080px] flex-col overflow-hidden bg-white font-['Noto_Sans','Noto_Sans_CJK_SC',sans-serif]">
      <StatusBar />
      <TitleBar />
      <Quote />
      <Notice />
      <PeriodTabs />
      <IndicatorBar />
      <CandleChart />
      <TrixBar />
      <TrixChart />
      <DateAxis />
      <Promo />
      <SectionTabs />
      <Cards />
      <BottomNav />
    </div>
  );
}
